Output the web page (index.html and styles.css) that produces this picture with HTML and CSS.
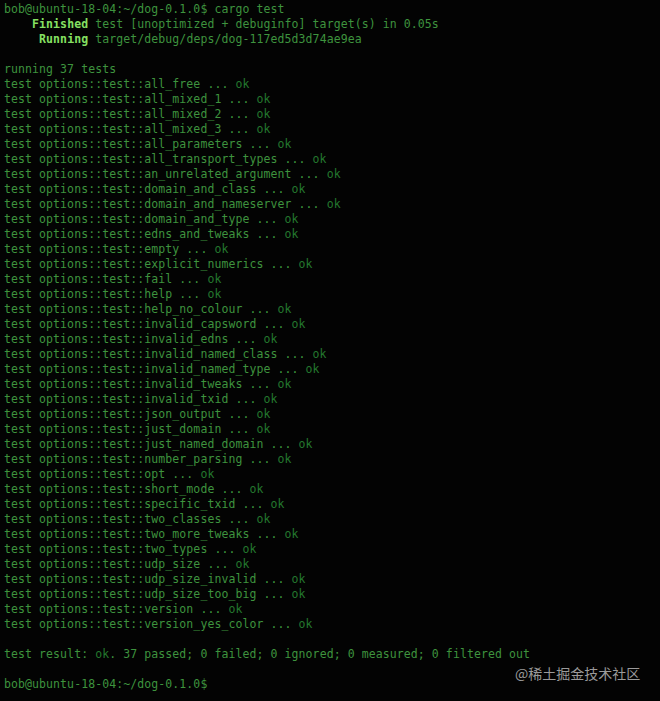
FILE: index.html
```html
<!DOCTYPE html>
<html>
<head>
<meta charset="utf-8">
<link rel="stylesheet" href="styles.css">
</head>
<body>
<div class="term">
<pre class="out">bob@ubuntu-18-04:~/dog-0.1.0$ cargo test
    <b class="hl">Finished</b> test [unoptimized + debuginfo] target(s) in 0.05s
     <b class="hl">Running</b> target/debug/deps/dog-117ed5d3d74ae9ea

running 37 tests
test options::test::all_free ... <span class="ok">ok</span>
test options::test::all_mixed_1 ... <span class="ok">ok</span>
test options::test::all_mixed_2 ... <span class="ok">ok</span>
test options::test::all_mixed_3 ... <span class="ok">ok</span>
test options::test::all_parameters ... <span class="ok">ok</span>
test options::test::all_transport_types ... <span class="ok">ok</span>
test options::test::an_unrelated_argument ... <span class="ok">ok</span>
test options::test::domain_and_class ... <span class="ok">ok</span>
test options::test::domain_and_nameserver ... <span class="ok">ok</span>
test options::test::domain_and_type ... <span class="ok">ok</span>
test options::test::edns_and_tweaks ... <span class="ok">ok</span>
test options::test::empty ... <span class="ok">ok</span>
test options::test::explicit_numerics ... <span class="ok">ok</span>
test options::test::fail ... <span class="ok">ok</span>
test options::test::help ... <span class="ok">ok</span>
test options::test::help_no_colour ... <span class="ok">ok</span>
test options::test::invalid_capsword ... <span class="ok">ok</span>
test options::test::invalid_edns ... <span class="ok">ok</span>
test options::test::invalid_named_class ... <span class="ok">ok</span>
test options::test::invalid_named_type ... <span class="ok">ok</span>
test options::test::invalid_tweaks ... <span class="ok">ok</span>
test options::test::invalid_txid ... <span class="ok">ok</span>
test options::test::json_output ... <span class="ok">ok</span>
test options::test::just_domain ... <span class="ok">ok</span>
test options::test::just_named_domain ... <span class="ok">ok</span>
test options::test::number_parsing ... <span class="ok">ok</span>
test options::test::opt ... <span class="ok">ok</span>
test options::test::short_mode ... <span class="ok">ok</span>
test options::test::specific_txid ... <span class="ok">ok</span>
test options::test::two_classes ... <span class="ok">ok</span>
test options::test::two_more_tweaks ... <span class="ok">ok</span>
test options::test::two_types ... <span class="ok">ok</span>
test options::test::udp_size ... <span class="ok">ok</span>
test options::test::udp_size_invalid ... <span class="ok">ok</span>
test options::test::udp_size_too_big ... <span class="ok">ok</span>
test options::test::version ... <span class="ok">ok</span>
test options::test::version_yes_color ... <span class="ok">ok</span>

test result: <span class="ok">ok</span>. 37 passed; 0 failed; 0 ignored; 0 measured; 0 filtered out

bob@ubuntu-18-04:~/dog-0.1.0$</pre>
<div class="mark">@稀土掘金技术社区</div>
</div>
</body>
</html>
```
FILE: styles.css
```css
html, body {
  margin: 0;
  padding: 0;
  background: #030303;
}
.term {
  position: relative;
  width: 660px;
  height: 701px;
  background: #030303;
  overflow: hidden;
}
.out {
  margin: 0;
  padding: 2px 4px 0 4px;
  font-family: "DejaVu Sans Mono", monospace;
  font-size: 11.5px;
  letter-spacing: 0.09px;
  line-height: 15px;
  color: #3e933e;
  white-space: pre;
}
.hl {
  color: #86e062;
  font-weight: bold;
}
.ok {
  color: #24782e;
}
.mark {
  position: absolute;
  left: 515px;
  top: 664px;
  font-family: "Noto Sans CJK SC", "Noto Sans", sans-serif;
  font-size: 14px;
  line-height: 18px;
  color: #9a9a9a;
}
```
